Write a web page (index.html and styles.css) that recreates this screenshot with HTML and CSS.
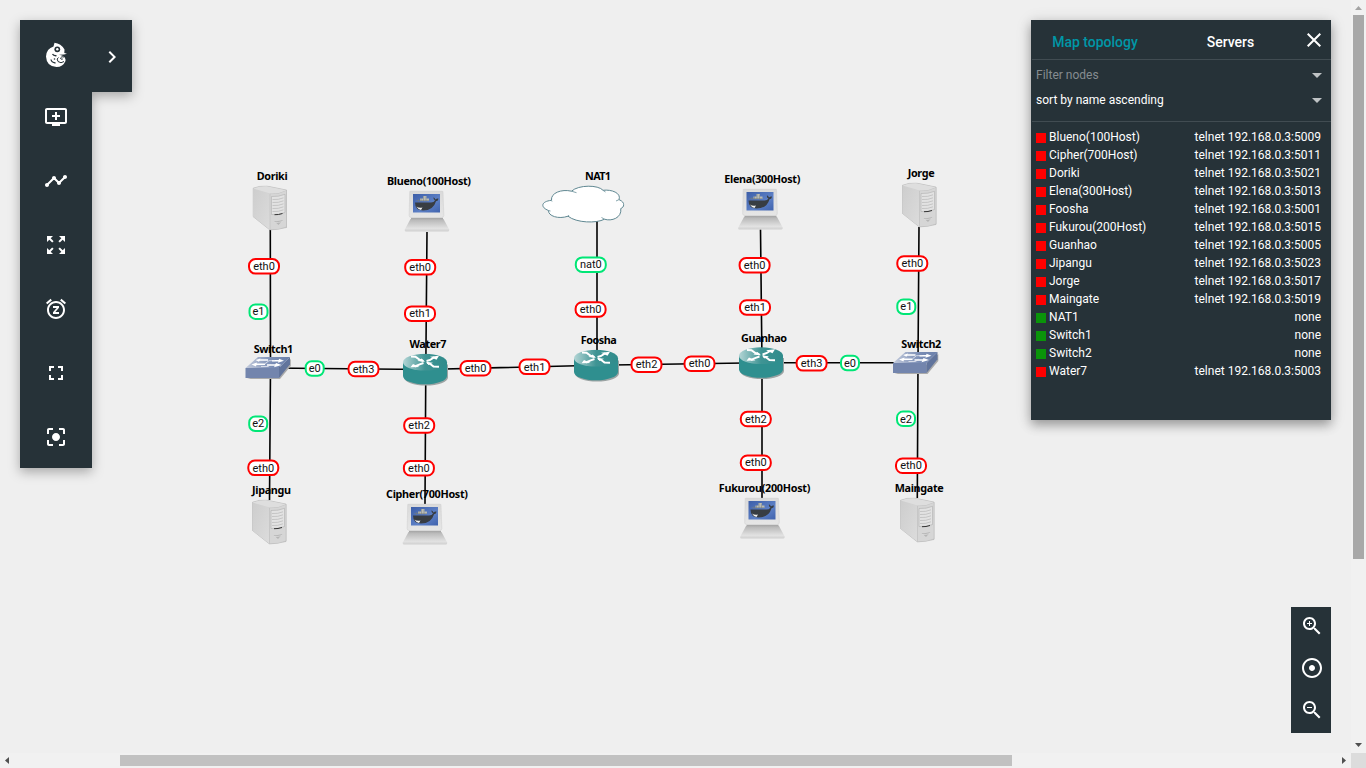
FILE: index.html
```html
<!DOCTYPE html>
<html lang="en">
<head>
<meta charset="utf-8">
<title>Topology</title>
<link rel="stylesheet" href="styles.css">
</head>
<body>
<div class="app">
  <main class="workspace">
    <svg class="map" width="1351" height="753" viewBox="0 0 1351 753">
      <defs>
        <linearGradient id="gSide" x1="0" y1="0" x2="1" y2="1"><stop offset="0" stop-color="#cdcdcd"/><stop offset="1" stop-color="#dcdcdc"/></linearGradient>
        <linearGradient id="gBase" x1="0" y1="0" x2="0" y2="1"><stop offset="0" stop-color="#b4b4b4"/><stop offset=".75" stop-color="#e2e2e2"/><stop offset="1" stop-color="#cfcfcf"/></linearGradient>
        <linearGradient id="gCase" x1="0" y1="0" x2="0" y2="1"><stop offset="0" stop-color="#dadada"/><stop offset="1" stop-color="#e6e6e6"/></linearGradient>
        <linearGradient id="gScreen" x1="0" y1="0" x2="1" y2="1"><stop offset="0" stop-color="#3c5ea8"/><stop offset=".6" stop-color="#5d80c6"/><stop offset="1" stop-color="#3f62ad"/></linearGradient>
        <linearGradient id="gRouter" x1="0" y1="0" x2="1" y2="0"><stop offset="0" stop-color="#b3d5d5"/><stop offset=".5" stop-color="#3f9494"/><stop offset="1" stop-color="#2f8b8b"/></linearGradient>
        <linearGradient id="gSwitch" x1="0" y1="0" x2="1" y2="0"><stop offset="0" stop-color="#c3cbdc"/><stop offset=".6" stop-color="#7a8db5"/><stop offset="1" stop-color="#6b80ab"/></linearGradient>
        <symbol id="server" width="35" height="45" viewBox="0 0 35 45">
          <path d="M.5 2.8Q7 .2 14 .5L34 4.6V42L17.500 44.500 .5 31z" fill="#cfcfcf" stroke="#b0b0b0" stroke-width=".6"/>
          <path d="M.5 3L17.500 8.200V44.300L.5 31z" fill="url(#gSide)"/>
          <path d="M17.500 8.200Q26 9 34 4.800V41.500Q26 44.800 17.500 44.300z" fill="#d6d6d6" stroke="#b8b8b8" stroke-width=".5"/>
          <path d="M.6 3Q7 .4 14 .7L33.800 4.700Q26 8.600 17.500 8z" fill="#dedede"/>
          <path d="M19 11Q26 11.500 32.500 8.800V27Q26 29.500 19 29z" fill="#e2e2e2" stroke="#b0b0b0" stroke-width=".6"/>
          <path d="M20 14q6 .5 11-1.700M20 17q6 .5 11-1.700M20 20q6 .5 11-1.700M20 23q6 .5 11-1.700M20 26q6 .5 11-1.700" fill="none" stroke="#bcbcbc" stroke-width=".8"/>
          <path d="M22 29.200q4 .2 8-1.200" fill="none" stroke="#333" stroke-width="1"/>
          <path d="M21.500 35.500Q26 36 30.500 34.500L26 39.500z" fill="#b5b5b5"/><path d="M22 37q4 .3 8-1" fill="none" stroke="#dcdcdc" stroke-width=".8"/>
        </symbol>
        <symbol id="computer" width="46" height="42" viewBox="0 0 46 42">
          <path d="M6.500 28.500H39.500L45.200 39Q45.500 41 44 41H1.800Q.3 41 .8 39z" fill="url(#gBase)"/>
          <path d="M7 28H39" stroke="#a9a9a9" stroke-width="1.400"/>
          <path d="M6.500 .5H38Q39 .5 39 1.500L39.800 25Q39.800 27 37.500 27H7.500Q5 27 5.200 25L5.700 1.300Q5.700.5 6.500.5z" fill="url(#gCase)" stroke="#d2d2d2" stroke-width=".6"/>
          <rect x="9" y="3.500" width="27" height="18.500" fill="url(#gScreen)"/>
          <path d="M12 10.500h4V8h3V5.500h3.500V8h2.500v2.500H12z" fill="#b9bcb7"/><path d="M14.500 8.500v3M17 7.500v4M19.500 5.500v6M22 6v5.500M12 10h13" stroke="#777c7b" stroke-width=".5"/>
          <path d="M11 12H27Q30 12 31 10 29 9.300 29.500 6.800 31 7.500 31.500 9 33 7.500 34.500 8.100 34.500 10.500 32 10.800 29.500 20 19 20 11 20 11 12z" fill="#383d43"/>
          <path d="M12.500 16Q15 18 18.500 17L17 19.500Q14 19 12.500 16z" fill="#f2f2f2"/>
        </symbol>
        <symbol id="router" width="46" height="33" viewBox="0 0 46 33">
          <path d="M1.500 9.500V24a22 8 0 0 0 44 0V11z" fill="#9ba3a3"/>
          <path d="M.5 8.500V22.500a22 8.300 0 0 0 44 0V8.500z" fill="#2f8f8f"/>
          <ellipse cx="22.500" cy="8.700" rx="22" ry="8.400" fill="url(#gRouter)"/>
          <path d="M8.500 3L13 3.200Q17 7 21 7.400M36.500 13.200L31 13Q27.500 9.700 24.500 9.300" fill="none" stroke="#fff" stroke-width="2"/>
          <path d="M24 7.500Q28 6.800 31.800 3.800M21 9.500Q17.500 10.500 12.500 13" fill="none" stroke="#fff" stroke-width="2"/>
          <path d="M27.500 3.200L36.500 2.200 34 6.200zM8 13.800L10.500 10.500 17 13.500zM14.800 7.600L22.500 8.200 19 5zM23.500 8.600L30.500 9.200 26 11.500z" fill="#fff"/>
        </symbol>
        <symbol id="switch" width="47" height="24" viewBox="0 0 47 24">
          <path d="M2 22.500H35L45.800 9.500V2.500L35 13z" fill="#aaa"/>
          <path d="M.5 11.500L13 .5H45L34 11.500z" fill="url(#gSwitch)"/>
          <path d="M.5 11.500H34V21.500H.5z" fill="#7385ad"/><path d="M34 11.500L45 .5V7.700L34 21.500z" fill="#61749c"/>
          <path d="M14 3.500H23M10 7.800H20M27 4.200H35M22 8.500H32" stroke="#fff" stroke-width="1.500"/>
          <path d="M10.500 3.600L15.500 1.900 14 5.300zM6.500 8L12 5.900 11 9.900zM34 2.200L39 4.200 33 6.200zM31 6.500L36.500 8.600 29 10.800z" fill="#fff"/>
          <path d="M20 7.200L24 4.200H30M16 10H23L26 7.800" fill="none" stroke="#e8ebf3" stroke-width=".8"/>
        </symbol>
        <symbol id="cloud" width="83" height="38" viewBox="0 0 83 38">
          <path d="M10 15.300C9 8 20 3.800 30 6.200 37-.4 57-.2 61.500 5.300 70 4.200 80 8 77.500 14.600 84.500 17.500 82.500 22.500 79.300 23.500 80.500 33 70 36.500 63 34.200 55 38.500 35 38 26.500 31.200 17 34.500 6.500 31 7 25.500-1 22.500-1 16.500 10 15.300z" fill="#fff" stroke="#5f8791" stroke-width="1"/>
          <path d="M30 6.200L35 7.700M61.500 5.300L64 7M77.500 14.600L74.500 16M7 25.500L9 26M26.500 31.200L27.500 30M63 34.200L60 32.500M10 15.300L10.500 16.500" stroke="#779aa3" fill="none" stroke-width=".9"/>
        </symbol>
        <symbol id="wide" width="34" height="19" viewBox="0 0 34 19"><rect x="2" y="2" width="30" height="14.500" rx="6.500"/></symbol>
        <symbol id="slim" width="22" height="19" viewBox="0 0 22 19"><rect x="2" y="2" width="18" height="14.500" rx="6"/></symbol>
      </defs>

      <g class="links">
        <path d="M270.300 230L270.500 368 269.500 500"/>
        <path d="M427 232L425.800 369 425 504"/>
        <path d="M597 220V365"/>
        <path d="M760.500 229.500L762 363V498"/>
        <path d="M919 227L918 363 917.300 498"/>
        <path d="M270 368L425 369.500 596 365.300 761 362.700 915 362.700"/>
      </g>

      <g class="nodes">
        <use href="#server" x="252.500" y="185.500"/><use href="#server" x="252" y="499.500"/>
        <use href="#server" x="902" y="182.500"/><use href="#server" x="900" y="497.500"/>
        <use href="#computer" x="404" y="190.500"/><use href="#computer" x="402" y="503.500"/>
        <use href="#computer" x="737.500" y="188.500"/><use href="#computer" x="739.500" y="497.500"/>
        <use href="#router" x="402.500" y="353.500"/><use href="#router" x="573.500" y="349.500"/><use href="#router" x="738.500" y="347"/>
        <use href="#switch" x="245" y="356.500"/><use href="#switch" x="892.500" y="351.500"/>
        <use href="#cloud" x="541.500" y="185"/>
      </g>

      <g class="names">
        <text x="256.700" y="180" textLength="31">Doriki</text>
        <text x="387" y="185" textLength="84">Blueno(100Host)</text>
        <text x="585" y="180" textLength="26">NAT1</text>
        <text x="724.300" y="183" textLength="76">Elena(300Host)</text>
        <text x="907.700" y="177" textLength="27">Jorge</text>
        <text x="253.700" y="353" textLength="39.500">Switch1</text>
        <text x="409.500" y="348" textLength="37">Water7</text>
        <text x="580.700" y="344" textLength="36">Foosha</text>
        <text x="741" y="342" textLength="46">Guanhao</text>
        <text x="901.300" y="348" textLength="40">Switch2</text>
        <text x="252" y="494" textLength="39">Jipangu</text>
        <text x="386" y="498" textLength="82">Cipher(700Host)</text>
        <text x="718.800" y="492" textLength="91.500">Fukurou(200Host)</text>
        <text x="894.700" y="492" textLength="49">Maingate</text>
      </g>

      <g class="ports stopped">
        <g transform="translate(264 266.300)"><use href="#wide" x="-17" y="-9.200"/><text y="3.700">eth0</text></g>
        <g transform="translate(363.500 369)"><use href="#wide" x="-17" y="-9.200"/><text y="3.700">eth3</text></g>
        <g transform="translate(263.300 467.800)"><use href="#wide" x="-17" y="-9.200"/><text y="3.700">eth0</text></g>
        <g transform="translate(420.200 267.300)"><use href="#wide" x="-17" y="-9.200"/><text y="3.700">eth0</text></g>
        <g transform="translate(420 313.600)"><use href="#wide" x="-17" y="-9.200"/><text y="3.700">eth1</text></g>
        <g transform="translate(475.500 368.200)"><use href="#wide" x="-17" y="-9.200"/><text y="3.700">eth0</text></g>
        <g transform="translate(534.500 366.800)"><use href="#wide" x="-17" y="-9.200"/><text y="3.700">eth1</text></g>
        <g transform="translate(419.200 425.500)"><use href="#wide" x="-17" y="-9.200"/><text y="3.700">eth2</text></g>
        <g transform="translate(418.900 468.200)"><use href="#wide" x="-17" y="-9.200"/><text y="3.700">eth0</text></g>
        <g transform="translate(590.600 309.400)"><use href="#wide" x="-17" y="-9.200"/><text y="3.700">eth0</text></g>
        <g transform="translate(646.500 364.600)"><use href="#wide" x="-17" y="-9.200"/><text y="3.700">eth2</text></g>
        <g transform="translate(699.500 363.700)"><use href="#wide" x="-17" y="-9.200"/><text y="3.700">eth0</text></g>
        <g transform="translate(754.600 265.300)"><use href="#wide" x="-17" y="-9.200"/><text y="3.700">eth0</text></g>
        <g transform="translate(755 307.400)"><use href="#wide" x="-17" y="-9.200"/><text y="3.700">eth1</text></g>
        <g transform="translate(811.600 363.300)"><use href="#wide" x="-17" y="-9.200"/><text y="3.700">eth3</text></g>
        <g transform="translate(912.300 263.400)"><use href="#wide" x="-17" y="-9.200"/><text y="3.700">eth0</text></g>
        <g transform="translate(755.800 419)"><use href="#wide" x="-17" y="-9.200"/><text y="3.700">eth2</text></g>
        <g transform="translate(755.800 462.700)"><use href="#wide" x="-17" y="-9.200"/><text y="3.700">eth0</text></g>
        <g transform="translate(911 465.700)"><use href="#wide" x="-17" y="-9.200"/><text y="3.700">eth0</text></g>
      </g>
      <g class="ports started">
        <g transform="translate(590.800 264.600)"><use href="#wide" x="-17" y="-9.200"/><text y="3.700">nat0</text></g>
        <g transform="translate(258.500 311.600)"><use href="#slim" x="-11" y="-9.200"/><text y="3.700">e1</text></g>
        <g transform="translate(314.700 368.500)"><use href="#slim" x="-11" y="-9.200"/><text y="3.700">e0</text></g>
        <g transform="translate(258.200 423.700)"><use href="#slim" x="-11" y="-9.200"/><text y="3.700">e2</text></g>
        <g transform="translate(906.300 306.700)"><use href="#slim" x="-11" y="-9.200"/><text y="3.700">e1</text></g>
        <g transform="translate(850 363)"><use href="#slim" x="-11" y="-9.200"/><text y="3.700">e0</text></g>
        <g transform="translate(906 418.800)"><use href="#slim" x="-11" y="-9.200"/><text y="3.700">e2</text></g>
      </g>
    </svg>

    <nav class="toolbar">
      <div class="tools">
        <a class="tool tool-logo">
          <svg width="24" height="26" viewBox="0 0 24 26">
            <path d="M10.500 .8Q17 1.500 20.500 7.500L20.300 11 23 11.800 20 12.600 15 12.800 18 13.500Q22 15 21.500 19 19 25 12.500 25 2.500 24.500 2 14.500 2.500 6.500 9.500 4.500z" fill="#fff"/>
            <circle cx="13.300" cy="7.300" r="2.900" fill="#263238"/><circle cx="13.300" cy="7.300" r="1.200" fill="#fff"/>
            <path d="M8.500 12Q9.500 14 12.500 13.700M7 17.500Q7.500 20.500 11.500 21" fill="none" stroke="#263238" stroke-width="1.300"/>
            <path d="M14.500 15.500Q12 16.500 14 19.500 17 22 20 19.500M20 15Q17.500 14 16.500 16 17 18 18.800 17" fill="none" stroke="#263238" stroke-width="1"/>
            <circle cx="10.500" cy="17" r=".8" fill="#263238"/>
          </svg>
        </a>
        <a class="tool"><svg class="icon" viewBox="0 0 24 24"><path d="M21 3H3c-1.110 0-2 .89-2 2v12c0 1.100.89 2 2 2h5v2h8v-2h5c1.100 0 1.990-.9 1.990-2L23 5c0-1.110-.9-2-2-2zm0 14H3V5h18v12zm-5-7v2h-3v3h-2v-3H8v-2h3V7h2v3h3z"/></svg></a>
        <a class="tool"><svg class="icon" viewBox="0 0 24 24"><path d="M23 8c0 1.100-.9 2-2 2-.18 0-.35-.02-.51-.07l-3.560 3.550c.05.16.07.34.07.52 0 1.100-.9 2-2 2s-2-.9-2-2c0-.18.02-.36.07-.52l-2.550-2.550c-.16.05-.34.07-.52.07s-.36-.02-.52-.07l-4.550 4.560c.05.16.07.33.07.51 0 1.100-.9 2-2 2s-2-.9-2-2 .9-2 2-2c.18 0 .35.02.51.07l4.560-4.550C8.020 9.360 8 9.180 8 9c0-1.100.9-2 2-2s2 .9 2 2c0 .18-.02.36-.07.52l2.550 2.550c.16-.05.34-.07.52-.07s.36.02.52.07l3.550-3.560C19.020 8.350 19 8.180 19 8c0-1.100.9-2 2-2s2 .9 2 2z"/></svg></a>
        <a class="tool"><svg class="icon" viewBox="0 0 24 24"><path d="M15 3l2.300 2.300-2.890 2.870 1.420 1.420L18.700 6.700 21 9V3zM3 9l2.300-2.300 2.870 2.890 1.420-1.420L6.700 5.300 9 3H3zm6 12l-2.300-2.300 2.890-2.870-1.420-1.420L5.300 17.300 3 15v6zm12-6l-2.300 2.300-2.870-2.890-1.420 1.420 2.890 2.870L15 21h6z"/></svg></a>
        <a class="tool"><svg class="icon" viewBox="0 0 24 24"><path d="M7.880 3.390L6.600 1.860 2 5.710l1.290 1.530 4.590-3.850zM22 5.720l-4.600-3.860-1.290 1.530 4.600 3.860L22 5.720zM12 4c-4.970 0-9 4.030-9 9s4.020 9 9 9c4.970 0 9-4.030 9-9s-4.030-9-9-9zm0 16c-3.870 0-7-3.130-7-7s3.130-7 7-7 7 3.130 7 7-3.130 7-7 7zm-3-9h3.630L9 15.200V17h6v-2h-3.630L15 10.800V9H9v2z"/></svg></a>
        <a class="tool"><svg class="icon" viewBox="0 0 24 24"><path d="M7 14H5v5h5v-2H7v-3zm-2-4h2V7h3V5H5v5zm12 7h-3v2h5v-5h-2v3zM14 5v2h3v3h2V5h-5z"/></svg></a>
        <a class="tool"><svg class="icon" viewBox="0 0 24 24"><path d="M12 8c-2.210 0-4 1.790-4 4s1.790 4 4 4 4-1.790 4-4-1.790-4-4-4zm-7 7H3v4c0 1.100.9 2 2 2h4v-2H5v-4zM5 5h4V3H5c-1.100 0-2 .9-2 2v4h2V5zm14-2h-4v2h4v4h2V5c0-1.100-.9-2-2-2zm0 16h-4v2h4c1.100 0 2-.9 2-2v-4h-2v4z"/></svg></a>
      </div>
      <a class="expander"><svg class="icon" viewBox="0 0 24 24"><path d="M10 6L8.590 7.410 13.170 12l-4.580 4.590L10 18l6-6z"/></svg></a>
    </nav>

    <aside class="panel">
      <header class="tabs">
        <span class="tab tab-active">Map topology</span>
        <span class="tab">Servers</span>
        <svg class="close" width="14" height="14" viewBox="0 0 14 14"><path d="M.7.7l12.600 12.600M13.300.7L.7 13.300" stroke="#fff" stroke-width="2"/></svg>
      </header>
      <div class="filters">
        <div class="select muted"><span>Filter nodes</span><i class="caret"></i></div>
        <div class="select"><span>sort by name ascending</span><i class="caret"></i></div>
      </div>
      <ul class="list">
        <li><i class="state"></i><span>Blueno(100Host)</span><span class="addr">telnet 192.168.0.3:5009</span></li>
        <li><i class="state"></i><span>Cipher(700Host)</span><span class="addr">telnet 192.168.0.3:5011</span></li>
        <li><i class="state"></i><span>Doriki</span><span class="addr">telnet 192.168.0.3:5021</span></li>
        <li><i class="state"></i><span>Elena(300Host)</span><span class="addr">telnet 192.168.0.3:5013</span></li>
        <li><i class="state"></i><span>Foosha</span><span class="addr">telnet 192.168.0.3:5001</span></li>
        <li><i class="state"></i><span>Fukurou(200Host)</span><span class="addr">telnet 192.168.0.3:5015</span></li>
        <li><i class="state"></i><span>Guanhao</span><span class="addr">telnet 192.168.0.3:5005</span></li>
        <li><i class="state"></i><span>Jipangu</span><span class="addr">telnet 192.168.0.3:5023</span></li>
        <li><i class="state"></i><span>Jorge</span><span class="addr">telnet 192.168.0.3:5017</span></li>
        <li><i class="state"></i><span>Maingate</span><span class="addr">telnet 192.168.0.3:5019</span></li>
        <li><i class="state on"></i><span>NAT1</span><span class="addr">none</span></li>
        <li><i class="state on"></i><span>Switch1</span><span class="addr">none</span></li>
        <li><i class="state on"></i><span>Switch2</span><span class="addr">none</span></li>
        <li><i class="state"></i><span>Water7</span><span class="addr">telnet 192.168.0.3:5003</span></li>
      </ul>
    </aside>

    <div class="zoombar">
      <svg class="icon" viewBox="0 0 24 24"><path d="M15.500 14h-.79l-.28-.27C15.410 12.590 16 11.110 16 9.500 16 5.910 13.090 3 9.500 3S3 5.910 3 9.500 5.910 16 9.500 16c1.610 0 3.090-.59 4.230-1.570l.27.28v.79l5 4.990L20.490 19l-4.990-5zm-6 0C7.010 14 5 11.990 5 9.500S7.010 5 9.500 5 14 7.010 14 9.500 11.990 14 9.500 14zm2.500-4h-2v2H9v-2H7V9h2V7h1v2h2v1z"/></svg>
      <svg class="icon" viewBox="0 0 24 24"><path d="M12 2C6.490 2 2 6.490 2 12s4.490 10 10 10 10-4.490 10-10S17.510 2 12 2zm0 18c-4.410 0-8-3.590-8-8s3.590-8 8-8 8 3.590 8 8-3.590 8-8 8zm3-8c0 1.660-1.340 3-3 3s-3-1.340-3-3 1.340-3 3-3 3 1.340 3 3z"/></svg>
      <svg class="icon" viewBox="0 0 24 24"><path d="M15.500 14h-.79l-.28-.27C15.410 12.590 16 11.110 16 9.500 16 5.910 13.090 3 9.500 3S3 5.910 3 9.500 5.910 16 9.500 16c1.610 0 3.090-.59 4.230-1.570l.27.28v.79l5 4.990L20.490 19l-4.990-5zm-6 0C7.010 14 5 11.990 5 9.500S7.010 5 9.500 5 14 7.010 14 9.500 11.990 14 9.500 14zM7 9h5v1H7z"/></svg>
    </div>
  </main>

  <div class="scroll scroll-y">
    <svg width="15" height="15" viewBox="0 0 15 15"><path d="M4 10h7L7.500 6z" fill="#a3a3a3"/></svg>
    <div class="thumb thumb-y"></div>
    <svg class="end" width="15" height="14" viewBox="0 0 15 14"><path d="M4 4h7L7.500 8z" fill="#505050"/></svg>
  </div>
  <div class="scroll scroll-x">
    <svg width="14" height="15" viewBox="0 0 14 15"><path d="M9 4v7L5 7.500z" fill="#505050"/></svg>
    <div class="thumb thumb-x"></div>
    <svg class="end" width="14" height="15" viewBox="0 0 14 15"><path d="M5 4v7l4-3.500z" fill="#505050"/></svg>
  </div>
  <div class="corner"></div>
</div>
</body>
</html>
```
FILE: styles.css
```css
* { box-sizing: border-box; }
body { margin: 0; font-family: Roboto, "Liberation Sans", sans-serif; overflow: hidden; }
.app { display: grid; grid-template: 753px 15px / 1351px 15px; background: #efefef; }
.workspace { position: relative; overflow: hidden; }
.map { display: block; }
.links path { fill: none; stroke: #000; stroke-width: 1.600; }
.names text { font: bold 10.800px "Noto Sans", "Open Sans", sans-serif; fill: #000; }
.ports { fill: #fff; stroke-width: 2; }
.stopped { stroke: #f00; }
.started { stroke: #00e676; }
.ports text { font-size: 11px; text-anchor: middle; fill: #111; stroke: none; }

.icon { width: 24px; height: 24px; fill: #fff; }

.toolbar { position: absolute; left: 20px; top: 20px; display: flex; align-items: flex-start; filter: drop-shadow(0 4px 6px rgba(0,0,0,.3)); }
.tools { display: flex; flex-direction: column; width: 72px; height: 448px; background: #263238; }
.tool { display: flex; align-items: center; justify-content: center; height: 64px; flex: none; }
.tool-logo { height: 65px; padding-top: 5px; }
.expander { display: flex; align-items: center; justify-content: center; width: 40px; height: 72px; padding-top: 1px; background: #263238; }

.panel { position: absolute; left: 1031px; top: 20px; width: 300px; height: 400px; background: #263238; color: #fff; box-shadow: 0 5px 10px rgba(0,0,0,.3), 0 2px 16px rgba(0,0,0,.12); }
.tabs { display: flex; height: 40px; margin-left: 1px; padding-top: 4px; align-items: center; border-bottom: 1px solid #414c52; }
.tab { width: 126px; text-align: center; font-size: 14px; font-weight: 500; }
.tab:nth-child(2) { width: 145px; }
.tab-active { color: #0097a7; }
.close { margin: -3px 0 0 4px; }
.filters { height: 62px; margin-left: 1px; padding: 2px 9px 0 4px; border-bottom: 1px solid #414c52; }
.select { display: flex; align-items: center; justify-content: space-between; height: 25px; font-size: 12px; }
.muted span { color: #858c90; }
.caret { margin-top: 2px; border: 5px solid transparent; border-top-color: #bfc3c5; border-bottom: 0; }
.list { margin: 0; padding: 6px 10px 0 5px; list-style: none; font-size: 12px; }
.list li { display: flex; align-items: center; height: 18px; }
.state { width: 10px; height: 10px; margin: 2px 3px 0 0; background: #f00; }
.on { background: #0a940a; }
.addr { margin-left: auto; }

.zoombar { position: absolute; left: 1291px; top: 607px; width: 40px; height: 126px; display: flex; flex-direction: column; align-items: center; gap: 18px; padding: 7px 0 0 2px; background: #263238; }

.scroll { display: flex; background: #f1f1f1; }
.scroll-y { flex-direction: column; }
.scroll svg { display: block; flex: none; }
.end { margin-top: auto; }
.scroll-x .end { margin: 0 0 0 auto; }
.thumb-y { width: 11px; height: 544px; margin-left: 2px; background: #a8a8a8; }
.thumb-x { width: 892px; height: 11px; margin: 2px 0 0 106px; background: #c1c1c1; }
.corner { background: #dcdcdc; }
```
